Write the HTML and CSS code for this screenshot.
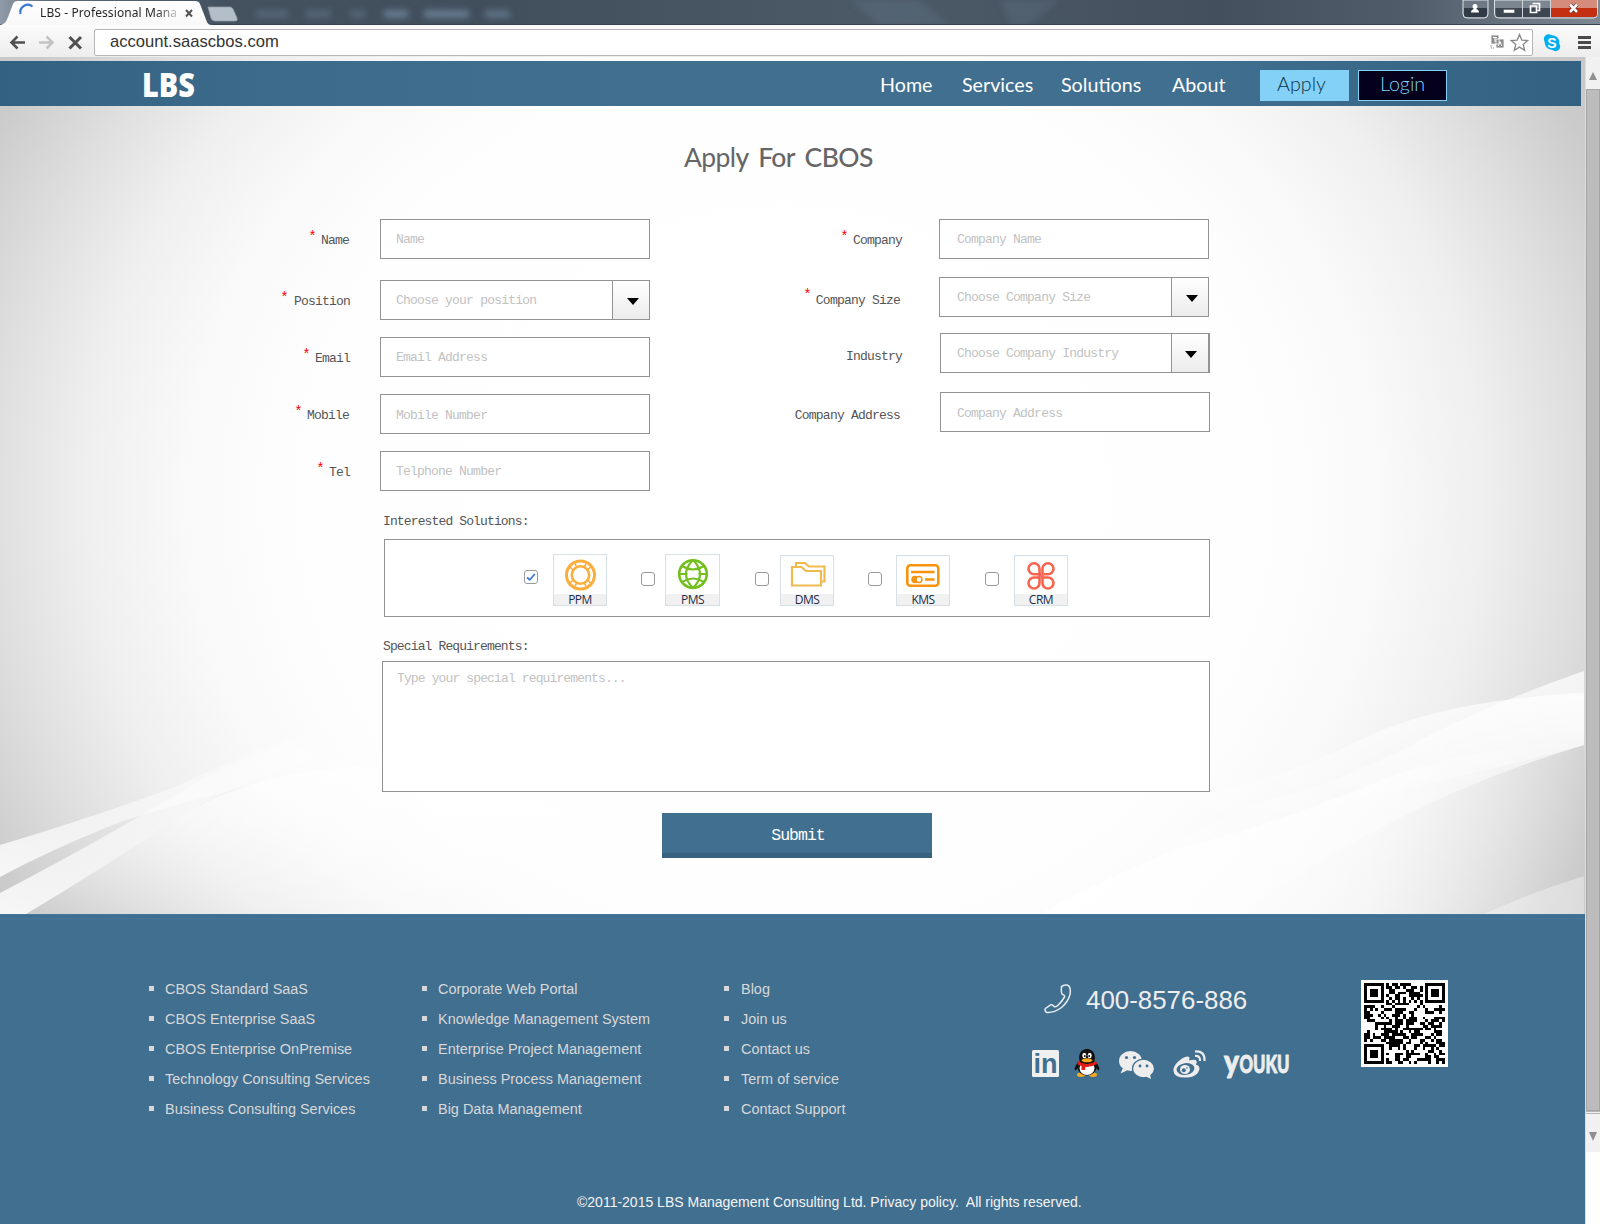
FILE: index.html
```html
<!DOCTYPE html>
<html lang="en">
<head>
<meta charset="utf-8">
<title>LBS - Professional Management</title>
<link rel="stylesheet" href="styles.css">
</head>
<body>
<div class="window">
  <div class="tabstrip">
    <svg class="tabstrip-art" width="1600" height="25" viewBox="0 0 1600 25">
      <defs>
        <linearGradient id="frame" x1="0" y1="0" x2="1" y2="0">
          <stop offset="0" stop-color="#8f9ba8"/><stop offset=".03" stop-color="#5c6977"/><stop offset=".14" stop-color="#44515f"/>
          <stop offset=".3" stop-color="#414e5c"/><stop offset=".55" stop-color="#4c5a67"/><stop offset=".76" stop-color="#434f5c"/><stop offset=".88" stop-color="#505c6a"/><stop offset="1" stop-color="#7d8893"/>
        </linearGradient>
        <linearGradient id="tab" x1="0" y1="0" x2="0" y2="1"><stop offset="0" stop-color="#fff"/><stop offset="1" stop-color="#f8f8f8"/></linearGradient>
        <filter id="soft" x="-20%" y="-50%" width="140%" height="200%"><feGaussianBlur stdDeviation="3"/></filter>
      </defs>
      <rect width="1600" height="25" fill="url(#frame)"/>
      <g filter="url(#soft)" fill="#667b90">
        <rect x="256" y="10" width="32" height="8" opacity=".5"/><rect x="306" y="10" width="25" height="8" opacity=".5"/><rect x="350" y="10" width="15" height="8" opacity=".5"/><rect x="384" y="10" width="24" height="8"/><rect x="424" y="10" width="45" height="8"/><rect x="485" y="10" width="25" height="8" opacity=".8"/>
        <path d="M850 0h70l30 25h-70zM1000 0h60l-30 25h-20z" opacity=".3"/>
      </g>
      <rect y="24" width="1600" height="1" fill="#38424e"/>
      <path d="M0 25c5-1 6-3 8-8L13 4q1-3 5-3h177q4 0 5 3l7 18q1 3 5 3z" fill="url(#tab)"/>
      <path d="M208 7h22q2 0 3 2l4 9q1 3-2 3h-20q-3 0-4-3z" fill="#b4bec8" stroke="#939ea9" stroke-width=".8"/>
      <path d="M20.500 14a7.500 7.500 0 0 1 12-7.500" fill="none" stroke="#3b7ad0" stroke-width="2.200"/>
      <path d="M186 10l6 6.500m0-6.500l-6 6.500" stroke="#555" stroke-width="2"/>
      <g>
        <path d="M1463 0v14q0 4 4 4h17q4 0 4-4V0z" fill="#6d7884" stroke="#dce1e5"/>
        <path d="M1464 8h23v6q0 3-3 3h-17q-3 0-3-3z" fill="#303b46"/>
        <path d="M1471 12.500q0-3 3-3.500-1.500-1-1.500-2.500a2.500 2.500 0 0 1 5 0q0 1.500-1.500 2.500 3 .5 3 3.500z" fill="#fff"/>
        <path d="M1494.500 0v14q0 4 4 4h95q4 0 4-4V0z" fill="#7c8690" stroke="#dce1e5"/>
        <path d="M1495.500 8h56v9h-53q-3 0-3-3z" fill="#3c4751"/>
        <path d="M1551 0h46v8h-46z" fill="#d58c7b"/><path d="M1551 8h46v6q0 3-3 3h-43z" fill="#c42f12"/>
        <path d="M1522.500 0v18m28-18v18" stroke="#cfd5da"/>
        <rect x="1503.500" y="9.500" width="11" height="3.500" fill="#fff" stroke="#555" stroke-width=".5"/>
        <path d="M1532.500 3.500h7v7h-2m-7-4.500h6v6.500h-6z" fill="none" stroke="#fff" stroke-width="1.700"/>
        <path d="M1570 4.500l7 7.500m0-7.500l-7 7.500" stroke="#4b2420" stroke-width="4"/>
        <path d="M1570 4.500l7 7.500m0-7.500l-7 7.500" stroke="#fff" stroke-width="2.600"/>
      </g>
    </svg>
    <span class="tab-title">LBS - Professional Mana</span>
  </div>
  <div class="toolbar">
    <svg class="nav-icons" width="94" height="32" viewBox="0 0 94 32">
      <g fill="none" stroke-width="2.500">
        <path d="M25 17.500H11.500m6-6l-6 6 6 6" stroke="#505050"/>
        <path d="M39 17.500h13.500m-6-6l6 6-6 6" stroke="#c4c4c4"/>
        <path d="M69.500 12l11.500 11.500m0-11.500L69.500 23.500" stroke="#505050" stroke-width="3"/>
      </g>
    </svg>
    <div class="omnibox">
      <span class="url">account.saascbos.com</span>
      <svg width="40" height="20" viewBox="0 0 40 20">
        <path d="M2 2h8v9H2zM7 6h8v9H7z" fill="#8c8c8c" stroke="#fff" stroke-width=".8"/>
        <path d="M4 4.500h4M6 4.500V9M9.300 13L11 8.500l1.700 4.500" fill="none" stroke="#fff" stroke-width="1"/>
        <path d="M2 12v3h3" fill="none" stroke="#8c8c8c" stroke-dasharray="1.500 1"/>
        <path d="M30.500 1.500l2.300 5.600 6 .4-4.600 3.900 1.500 6-5.200-3.300-5.200 3.300 1.500-6-4.600-3.900 6-.4z" fill="#fff" stroke="#888" stroke-width="1.300"/>
      </svg>
    </div>
    <svg class="ext-icons" width="60" height="32" viewBox="0 0 60 32">
      <circle cx="18" cy="17.500" r="7.300" fill="#00aff0"/><circle cx="14.500" cy="14" r="4.700" fill="#00aff0"/><circle cx="21.500" cy="21.500" r="4.700" fill="#00aff0"/>
      <text x="18" y="22.500" text-anchor="middle" class="skype-s">S</text>
      <path d="M44 12.500h13m-13 5h13m-13 5h13" stroke="#4a4a4a" stroke-width="3"/>
    </svg>
  </div>
  <div class="viewport">
    <div class="page">
      <svg class="waves" width="1584" height="857" viewBox="0 57 1584 857" preserveAspectRatio="none">
        <defs>
          <linearGradient id="wl" x1="0" y1="1" x2="1" y2="0"><stop offset="0" stop-color="#fff" stop-opacity=".85"/><stop offset="1" stop-color="#fff" stop-opacity="0"/></linearGradient>
          <linearGradient id="wr" x1="1" y1="0" x2="0" y2="1"><stop offset="0" stop-color="#fff" stop-opacity=".75"/><stop offset="1" stop-color="#fff" stop-opacity="0"/></linearGradient>
          <linearGradient id="wv" x1="0" y1="0" x2="0" y2="1"><stop offset="0" stop-color="#fff" stop-opacity=".75"/><stop offset="1" stop-color="#fff" stop-opacity="0"/></linearGradient>
          <linearGradient id="wf" x1="0" y1="0" x2="1" y2="0"><stop offset="0" stop-color="#fff" stop-opacity=".9"/><stop offset=".6" stop-color="#fff" stop-opacity=".6"/><stop offset="1" stop-color="#fff" stop-opacity="0"/></linearGradient>
        </defs>
        <path d="M26 914Q100 870 190 810Q300 755 420 770Q600 800 700 914z" fill="url(#wv)"/>
        <path d="M0 845Q100 815 180 785Q280 735 380 715L380 760Q250 780 120 822Q50 850 0 877z" fill="url(#wl)"/>
        <path d="M0 893Q120 830 200 780Q300 730 380 712L380 745Q270 765 190 810Q100 870 26 914L0 914z" fill="url(#wl)"/>
        <path d="M1584 671Q1500 700 1430 735Q1340 785 1250 805Q1150 850 1040 914L1240 914Q1400 800 1584 745z" fill="url(#wr)"/>
        <path d="M1584 693Q1440 700 1360 740Q1280 780 1200 795L1160 835Q1380 800 1584 745z" fill="url(#wv)"/>
        <path d="M1584 740Q1450 750 1370 785Q1270 825 1180 848Q1100 880 1040 914L1584 914z" fill="url(#wf)"/>
        <path d="M1584 876Q1530 893 1484 914L1584 914z" fill="#fff" opacity=".35"/>
      </svg>
      <header class="site-header">
        <div class="logo">LBS</div>
        <nav class="nav">
          <a class="n-home">Home</a><a class="n-services">Services</a><a class="n-solutions">Solutions</a><a class="n-about">About</a>
          <a class="btn btn-apply">Apply</a><a class="btn btn-login">Login</a>
        </nav>
      </header>
      <main class="main">
        <h1 class="title"><span class="thin">Appl</span>y&nbsp; For&nbsp; CBOS</h1>
        <form class="form">
          <div class="fields">
            <div class="col col-left">
              <div class="row"><label class="label nudge"><i>*</i>Name</label><div class="input">Name</div></div>
              <div class="row"><label class="label wide"><i>*</i>Position</label><div class="input select"><span>Choose your position</span><b></b></div></div>
              <div class="row"><label class="label"><i>*</i>Email</label><div class="input">Email Address</div></div>
              <div class="row"><label class="label nudge"><i>*</i>Mobile</label><div class="input low">Mobile Number</div></div>
              <div class="row"><label class="label"><i>*</i>Tel</label><div class="input">Telphone Number</div></div>
            </div>
            <div class="col col-right">
              <div class="row"><label class="label"><i>*</i>Company</label><div class="input">Company Name</div></div>
              <div class="row"><label class="label shift drop"><i class="high">*</i>Company Size</label><div class="input select"><span>Choose Company Size</span><b></b></div></div>
              <div class="row"><label class="label drop">Industry</label><div class="input select off"><span>Choose Company Industry</span><b></b></div></div>
              <div class="row"><label class="label shift drop">Company Address</label><div class="input off low">Company Address</div></div>
            </div>
          </div>
          <div class="caption c1">Interested Solutions:</div>
          <div class="solutions">
            <div class="sol s1"><span class="check"><svg width="12" height="12" viewBox="0 0 12 12"><path d="M2 6.500l2.800 2.300L9.800 3" fill="none" stroke="#3b7bd0" stroke-width="1.800"/></svg></span>
              <div class="tile"><svg width="52" height="39" viewBox="0 0 52 39"><g fill="none" stroke="#fbae3c"><circle cx="26.500" cy="20" r="14" stroke-width="3"/><circle cx="26.500" cy="20" r="8.700" stroke-width="2.600"/><path d="M15.500 11.500l4 4m1.500-6.500l2 3.500M37 11.500l-4 4m-1-6.500l-2 3.500M15.500 28.500l4-4m1.500 6.500l2-3.500M37 28.500l-4-4m-1 6.500l-2-3.500" stroke-width="1.600"/></g></svg><span>PPM</span></div></div>
            <div class="sol s2"><span class="check"></span>
              <div class="tile"><svg width="53" height="39" viewBox="0 0 53 39"><g fill="none" stroke="#74bf20" stroke-width="2.200"><circle cx="27" cy="19" r="13.800" stroke-width="2.600"/><path d="M27 5q-14 14 0 28q14-14 0-28M16 11q11 7 22 0M16 27q11-7 22 0M13.500 19h8m11 0h8"/></g></svg><span>PMS</span></div></div>
            <div class="sol s3"><span class="check"></span>
              <div class="tile"><svg width="52" height="39" viewBox="0 0 52 39"><path d="M11 12h9.500l4.500 4h15v14.500H11zM15 12V8h9l4 3.500h15.500v15h-3.500" fill="none" stroke="#efbb50" stroke-width="2.200"/></svg><span>DMS</span></div></div>
            <div class="sol s4"><span class="check"></span>
              <div class="tile"><svg width="52" height="39" viewBox="0 0 52 39"><rect x="10.300" y="10.300" width="31" height="20.500" rx="3" fill="none" stroke="#f7930f" stroke-width="2.600"/><path d="M14 17h23.500M28 24.500h9.500" stroke="#f7930f" stroke-width="2.300"/><circle cx="18" cy="24.500" r="3.700" fill="#f7930f"/><circle cx="22" cy="24.500" r="3" fill="#fff" stroke="#f7930f" stroke-width="1.400"/></svg><span>KMS</span></div></div>
            <div class="sol s5"><span class="check"></span>
              <div class="tile"><svg width="52" height="39" viewBox="0 0 52 39"><g fill="none" stroke="#f86450" stroke-width="2.600"><path d="M26 19.200h-7a5.500 5.500 0 1 1 5.500-5.500v6M27.500 21v-7.300a5.500 5.500 0 1 1 5.500 5.500h-4M24.500 20v8a5.500 5.500 0 1 1-5.500-5.500h5M26 22.500h7a5.500 5.500 0 1 1-5.500 5.500v-7"/></g></svg><span>CRM</span></div></div>
          </div>
          <div class="caption c2">Special Requirements:</div>
          <div class="textarea">Type your special requirements...</div>
          <div class="submit">Submit</div>
        </form>
      </main>
      <footer class="footer">
        <div class="footer-top">
          <ul class="links l1"><li>CBOS Standard SaaS</li><li>CBOS Enterprise SaaS</li><li>CBOS Enterprise OnPremise</li><li>Technology Consulting Services</li><li>Business Consulting Services</li></ul>
          <ul class="links l2"><li>Corporate Web Portal</li><li>Knowledge Management System</li><li>Enterprise Project Management</li><li>Business Process Management</li><li>Big Data Management</li></ul>
          <ul class="links l3"><li>Blog</li><li>Join us</li><li>Contact us</li><li>Term of service</li><li>Contact Support</li></ul>
          <div class="contact">
            <div class="phone">
              <svg width="28" height="30" viewBox="0 0 28 30"><path d="M17.500 2.500q5-2.500 7.500-.5 2 3 1 8.500-2 7.500-8.500 13Q10 29 3 28.500 0 27 1.500 24.500l5-3.500q2-.8 3.500 1.500 2 .8 4-1.200 4-4 6.500-8.300.5-2-2-2.500-1-.5-1.200-3.500z" fill="none" stroke="#e9edf0" stroke-width="1.500"/></svg>
              <span>400-8576-886</span>
            </div>
            <svg class="social" width="264" height="40" viewBox="0 0 264 40">
              <rect x="0" y="2" width="27" height="27" rx="1.500" fill="#f0f0f0"/>
              <text x="13.500" y="25" text-anchor="middle" class="in-mark">in</text>
              <g>
                <ellipse cx="49" cy="26.800" rx="4" ry="2.200" fill="#f9a91b"/><ellipse cx="61" cy="26.800" rx="4" ry="2.200" fill="#f9a91b"/>
                <path d="M46 14q-5 7-2.500 8.500l3-3zM64 14q5 7 2.500 8.500l-3-3z" fill="#111"/>
                <ellipse cx="55" cy="19" rx="9.500" ry="8.500" fill="#111"/><ellipse cx="55" cy="20" rx="7.500" ry="7" fill="#fff"/>
                <ellipse cx="55" cy="9.500" rx="8" ry="8.800" fill="#111"/>
                <ellipse cx="52.300" cy="7.500" rx="2" ry="2.700" fill="#fff"/><ellipse cx="57.700" cy="7.500" rx="2" ry="2.700" fill="#fff"/><circle cx="52.800" cy="8" r=".9"/><circle cx="57.200" cy="8" r=".9"/>
                <ellipse cx="55" cy="12.300" rx="5.500" ry="2" fill="#f9a91b"/>
                <path d="M46 13q9 6 18 0l1 3q-6 3.500-11.500 3l-.5 3h-3.500v-4q-4-.8-4-2z" fill="#e21b1b"/>
              </g>
              <g fill="#ededed"><ellipse cx="98.500" cy="13" rx="11.500" ry="10"/><path d="M91 20l-2.500 5.500 6.500-3z"/></g>
              <ellipse cx="111.500" cy="20.500" rx="11" ry="9.300" fill="#ededed" stroke="#416f90" stroke-width="1.200"/><path d="M114 28.500l5 2.500-1-5z" fill="#ededed"/>
              <g fill="#416f90"><circle cx="94.500" cy="9.500" r="1.600"/><circle cx="102.500" cy="9.500" r="1.600"/><circle cx="108" cy="18" r="1.400"/><circle cx="115" cy="18" r="1.400"/></g>
              <path d="M150 10.500q6-3.500 7.500-1l-.3 3q6-1.700 7.200.3 1 1.500-.5 3.700 4 1 3.500 5-2 7-11.500 8-14 1-14.500-7 0-6 8.600-12z" fill="#ededed"/>
              <ellipse cx="153.500" cy="21" rx="9" ry="5.800" fill="#416f90" transform="rotate(-8 153.500 21)"/><ellipse cx="153" cy="21.500" rx="5" ry="4.500" fill="#ededed"/><circle cx="151.800" cy="22.300" r="2" fill="#416f90"/><circle cx="155" cy="20" r=".8" fill="#416f90"/>
              <path d="M163 3.500q10-1 9.500 9.500M163 8q5.500-.5 5 5" fill="none" stroke="#ededed" stroke-width="2.200"/>
              <text x="192" y="24.500" class="youku" textLength="15" lengthAdjust="spacingAndGlyphs" font-size="32">y</text>
              <text x="207.500" y="24.500" class="youku" textLength="50" lengthAdjust="spacingAndGlyphs" font-size="24">OUKU</text>
            </svg>
          </div>
          <svg class="qr" id="qr" width="87" height="87" viewBox="-1.200 -1.200 31.400 31.400" shape-rendering="crispEdges"><rect x="-2" y="-2" width="34" height="34" fill="#fff"/></svg>
        </div>
        <p class="copyright">©2011-2015 LBS Management Consulting Ltd. Privacy policy.&nbsp; All rights reserved.</p>
      </footer>
    </div>
    <div class="scrollbar">
      <div class="sb-btn"><span class="up"></span></div>
      <div class="sb-thumb"></div>
      <div class="sb-btn sb-bottom"><span class="down"></span></div>
    </div>
  </div>
</div>
<script src="qr.js"></script>
</body>
</html>
```
FILE: styles.css
```css
* { box-sizing: border-box; }
body { margin: 0; background: #fff; font-family: "Liberation Sans", sans-serif; }
.window { width: 1600px; height: 1224px; overflow: hidden; display: flex; flex-direction: column; }

.tabstrip { height: 25px; flex: none; position: relative; }
.tabstrip-art { display: block; }
.tab-title { position: absolute; left: 40px; top: 4px; font: 12px/18px "Noto Sans", sans-serif; letter-spacing: .1px; white-space: nowrap; color: #222; background: linear-gradient(90deg, #222 85%, #ccc); -webkit-background-clip: text; background-clip: text; -webkit-text-fill-color: transparent; }

.toolbar { height: 32px; flex: none; display: flex; background: linear-gradient(#fbfbfb, #ededed); }
.nav-icons { flex: none; }
.omnibox { margin-top: 4px; width: 1439px; height: 27px; border: 1px solid #b5b5b5; border-radius: 2px; background: #fff; display: flex; align-items: center; justify-content: space-between; padding: 0 3px 0 15px; }
.url { font-size: 16.600px; line-height: 24px; margin-top: -2px; color: #333; }
.ext-icons { margin-left: 1px; }
.skype-s { font: bold 14px "Liberation Sans", sans-serif; fill: #fff; }

.viewport { flex: 1; display: flex; }
.page { width: 1585px; height: 1167px; position: relative; padding-top: 4px; background: radial-gradient(ellipse 1000px 900px at 785px 440px, #fff 0, #fefefe 48%, #f9f9f9 60%, #efefef 70%, #dfdfdf 79%, #cbcbcb 89%, #c4c4c4 100%); }
.waves { position: absolute; left: 0; top: 0; }

.site-header { position: relative; width: 1581px; height: 45px; display: flex; align-items: center; padding-left: 142px; background: linear-gradient(90deg, #336182 0, #3d6b8c 18%, #416f90 40%, #416f90 75%, #336182 100%); color: #fff; }
.logo { width: 738px; font: 900 33.500px/45px "Open Sans", sans-serif; transform: scaleX(.86); transform-origin: 0 50%; padding-top: 1px; }
.nav { display: flex; height: 45px; font: 400 19.700px/47px Lato, sans-serif; }
.nav a { white-space: nowrap; }
.n-home { width: 82px; }
.n-services { width: 99px; }
.n-solutions { width: 111px; }
.n-about { width: 88px; }
.nav .btn { width: 89px; height: 31px; margin: 9px 9px 0 0; line-height: 26px; text-align: center; font-weight: 300; border: 1px solid #83d1f7; }
.nav .btn-apply { background: #83d1f7; color: #0b3048; padding-right: 6px; }
.nav .btn-login { background: #05001c; color: #83d1f7; }

.main { position: relative; height: 808px; }
.title { margin: 0; height: 113px; padding: 33px 0 0 684px; font: 500 26.500px/36px Lato, sans-serif; letter-spacing: -.6px; word-spacing: -1px; color: #666; white-space: nowrap; }
.title .thin { font-weight: 400; }
.form { font: 13px/16px "Liberation Mono", monospace; letter-spacing: -.79px; color: #555; }
.fields { display: flex; height: 272px; }
.col-left { width: 650px; }
.col-right { width: 560px; }
.row { display: flex; height: 40px; }
.col-left .row + .row { margin-top: 17px; }
.col-left .row:nth-child(2) { margin-top: 21px; }
.col-right .row:nth-child(2) { margin-top: 18px; }
.col-right .row:nth-child(3) { margin-top: 16px; }
.col-right .row:nth-child(4) { margin-top: 19px; }
.label { display: flex; justify-content: flex-end; gap: 5px; width: 380px; padding: 14px 30px 0 0; }
.col-right .label { width: 289px; padding-right: 37px; }
.label.nudge { padding-right: 31px; }
.label.wide { gap: 6px; }
.col-right .label.shift { padding-right: 39px; }
.col-right .label.drop { padding-top: 16px; }
.label i { font-style: normal; color: #f00; line-height: 10px; margin-top: -1px; font-size: 14px; }
.label i.high { margin-top: -3px; }
.input { width: 270px; height: 40px; border: 1px solid #939393; background: #fff; padding: 12px 0 0 15px; color: #c2c2c2; white-space: nowrap; }
.col-right .input { padding-left: 17px; }
.input.low { padding-top: 13px; }
.input.off { margin-left: 1px; margin-right: -1px; }
.col-right .input.off { padding-left: 16px; }
.select { display: flex; justify-content: space-between; }
.select b { width: 37px; height: 38px; margin-top: -12px; border-left: 1px solid #939393; background: linear-gradient(#fff, #ececec); display: flex; align-items: center; justify-content: center; padding: 3px 0 0 3px; }
.select b::before { content: ""; border: 6px solid transparent; border-top: 7px solid #000; border-bottom: 0; }
.select.off b { width: 38px; padding-left: 1px; border-right: 1px solid #939393; }

.caption { height: 16px; margin-left: 383px; letter-spacing: -.87px; }
.c1 { margin-top: 23px; }
.c2 { margin-top: 22px; }
.solutions { margin: 9px 0 0 384px; width: 826px; height: 78px; border: 1px solid #939393; background: #fff; display: flex; padding: 14px 0 0 139px; }
.sol { display: flex; align-items: flex-start; }
.s1 { width: 117px; }
.s2 { width: 114px; }
.s3 { width: 113px; }
.s4 { width: 117px; }
.check { width: 14px; height: 14px; margin: 18px 15px 0 0; border: 1px solid #999; border-radius: 3px; background: #fff; flex: none; display: flex; }
.s1 .check { margin-top: 16px; }
.s2 .check { margin-right: 10px; }
.s3 .check { margin-right: 11px; }
.s4 .check { margin-right: 14px; }
.tile { width: 54px; height: 52px; border: 1px solid #d6e0e8; background: #fff; display: flex; flex-direction: column; flex: none; }
.s2 .tile { width: 55px; }
.s3 .tile, .s4 .tile, .s5 .tile { margin-top: 1px; height: 51px; }
.tile svg { flex: none; }
.s3 .tile svg, .s4 .tile svg, .s5 .tile svg { margin-top: -1px; }
.tile span { flex: 1; background: #f1f1f1; text-align: center; font: 12px/11px "Open Sans", sans-serif; letter-spacing: -.5px; color: #1e2d4a; }
.textarea { margin: 6px 0 0 382px; width: 828px; height: 131px; border: 1px solid #939393; background: #fff; padding: 9px 14px; letter-spacing: -.87px; color: #c2c2c2; }
.submit { margin: 21px 0 0 662px; width: 270px; height: 45px; background: #416f90; border-bottom: 5px solid #38617f; color: #fff; text-align: center; padding-left: 2px; font-size: 16.500px; line-height: 46px; letter-spacing: -1px; }

.footer { position: relative; height: 310px; background: linear-gradient(#4a7c9e 0, #3d6a8a 2px, #447496 4px, #416f90 7px); color: #d8d8d8; padding-top: 60px; }
.footer-top { display: flex; height: 200px; padding-left: 149px; }
.links { margin: 0; padding: 0; list-style: none; font-size: 14.460px; line-height: 30px; white-space: nowrap; }
.links li { display: flex; align-items: center; }
.links li::before { content: ""; width: 5px; height: 5px; background: #d8d8d8; margin: -1px 11px 0 0; }
.l1 { width: 273px; }
.l2 { width: 302px; }
.l3 { width: 308px; }
.l3 li::before { margin-right: 12px; }
.contact { width: 329px; padding-top: 9px; }
.phone { display: flex; height: 34px; padding-left: 12px; align-items: flex-start; }
.phone svg { margin-top: 1px; }
.phone span { margin-left: 14px; font-size: 25.900px; line-height: 34px; color: #eee; }
.social { display: block; margin-top: 31px; overflow: visible; }
.in-mark { font: bold 27px "Liberation Sans", sans-serif; fill: #416f90; }
.youku { font-family: Lato, sans-serif; font-weight: 900; fill: #ededed; stroke: #ededed; stroke-width: .9px; stroke-linejoin: round; }
.qr { margin-top: 6px; }
.copyright { margin: 19px 0 0 577px; font-size: 14px; line-height: 18px; color: #f4f4f4; white-space: nowrap; }

.scrollbar { width: 15px; display: flex; flex-direction: column; border-left: 1px solid #ddd; background: #fff; }
.sb-btn { height: 32px; background: #f1f1f1; display: flex; justify-content: center; padding-top: 15px; }
.sb-btn span { width: 0; height: 0; border: 4px solid transparent; }
.sb-btn .up { border-bottom: 8px solid #8f8f8f; border-top: 0; }
.sb-btn .down { border-top: 9px solid #8f8f8f; border-bottom: 0; }
.sb-thumb { height: 1022px; background: #bcbcbc; border: 1px solid #a5a5a5; }
.sb-bottom { height: 41px; padding-top: 18px; border-top: 3px double #b5b5b5; }
```
FILE: qr.js
```js
// Fills the code square: three finders, timing lines, and data modules.
(function () {
  var n = 29, seed = 7, d = '';
  function rnd() { seed = (seed * 1103515245 + 12345) % 2147483648; return seed / 2147483648; }
  function finder(x, y, fx, fy) {
    var dx = Math.abs(x - fx), dy = Math.abs(y - fy), m = Math.max(dx, dy);
    return m > 4 ? null : m === 3 || m <= 1;
  }
  for (var y = 0; y < n; y++) {
    for (var x = 0; x < n; x++) {
      var on = rnd() < 0.5, f = finder(x, y, 3, 3);
      if (f === null) f = finder(x, y, n - 4, 3);
      if (f === null) f = finder(x, y, 3, n - 4);
      if (f !== null) on = f;
      else if (x === 6 || y === 6) on = (x + y) % 2 === 0;
      if (on) d += 'M' + x + ' ' + y + 'h1v1h-1z';
    }
  }
  var p = document.createElementNS('http://www.w3.org/2000/svg', 'path');
  p.setAttribute('d', d);
  document.getElementById('qr').appendChild(p);
})();
```
